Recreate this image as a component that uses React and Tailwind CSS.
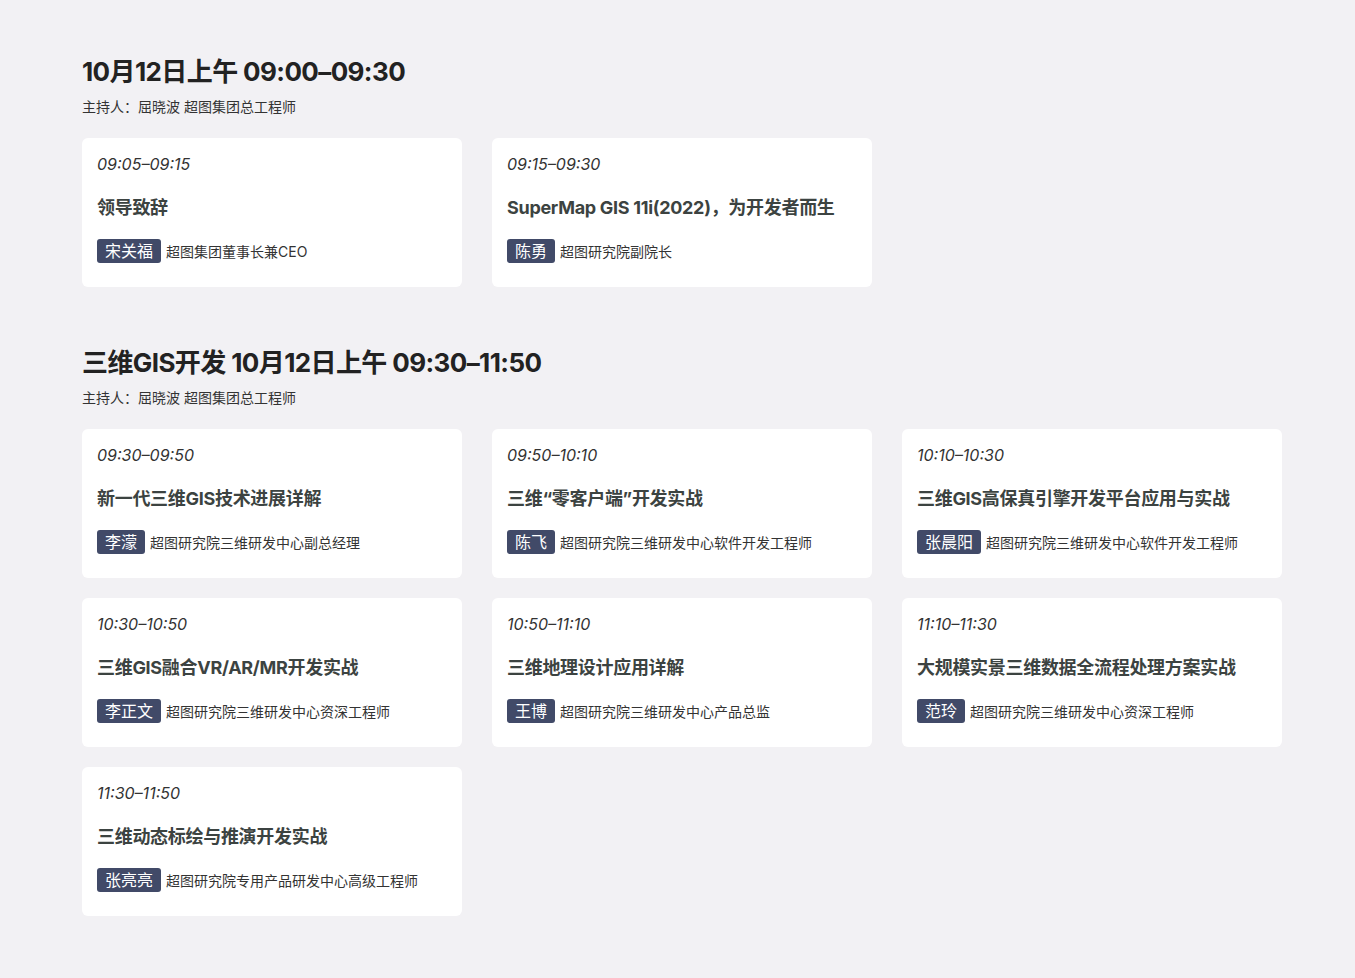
const sections = [
  {
    title: '10月12日上午 09:00–09:30',
    host: '主持人：屈晓波 超图集团总工程师',
    talks: [
      { time: '09:05–09:15', title: '领导致辞', name: '宋关福', role: '超图集团董事长兼CEO' },
      { time: '09:15–09:30', title: 'SuperMap GIS 11i(2022)，为开发者而生', name: '陈勇', role: '超图研究院副院长' },
    ],
  },
  {
    title: '三维GIS开发 10月12日上午 09:30–11:50',
    host: '主持人：屈晓波 超图集团总工程师',
    talks: [
      { time: '09:30–09:50', title: '新一代三维GIS技术进展详解', name: '李濛', role: '超图研究院三维研发中心副总经理' },
      { time: '09:50–10:10', title: '三维“零客户端”开发实战', name: '陈飞', role: '超图研究院三维研发中心软件开发工程师' },
      { time: '10:10–10:30', title: '三维GIS高保真引擎开发平台应用与实战', name: '张晨阳', role: '超图研究院三维研发中心软件开发工程师' },
      { time: '10:30–10:50', title: '三维GIS融合VR/AR/MR开发实战', name: '李正文', role: '超图研究院三维研发中心资深工程师' },
      { time: '10:50–11:10', title: '三维地理设计应用详解', name: '王博', role: '超图研究院三维研发中心产品总监' },
      { time: '11:10–11:30', title: '大规模实景三维数据全流程处理方案实战', name: '范玲', role: '超图研究院三维研发中心资深工程师' },
      { time: '11:30–11:50', title: '三维动态标绘与推演开发实战', name: '张亮亮', role: '超图研究院专用产品研发中心高级工程师' },
    ],
  },
];

function TalkCard({ talk }) {
  return (
    <div className="bg-white rounded-md pt-4 pb-6 px-[15px] h-[149px]">
      <div className="italic text-[16px] leading-5 text-[#333]">{talk.time}</div>
      <div className="mt-[21px] text-[18px] leading-[26px] font-bold tracking-[-0.3px] text-[#3c4341]">{talk.title}</div>
      <div className="mt-[18px] flex items-center">
        <span className="bg-[#414a68] text-white text-[16px] leading-6 h-6 px-2 rounded-[3px]">{talk.name}</span>
        <span className="ml-[5px] text-[14px] text-[#333]">{talk.role}</span>
      </div>
    </div>
  );
}

export default function App() {
  return (
    <div
      className="min-h-[978px] bg-[#f2f1f4] pl-[82px] pt-[55px] pb-10"
      style={{ fontFamily: 'Inter, "Noto Sans CJK SC", sans-serif' }}
    >
      {sections.map((s, i) => (
        <section key={i} className={i > 0 ? 'mt-[59px]' : ''}>
          <h2 className="text-[26px] leading-[34px] font-bold tracking-[-0.6px] text-[#222]">{s.title}</h2>
          <p className="mt-[8px] text-[14px] leading-5 text-[#333]">{s.host}</p>
          <div className="mt-[21px] grid grid-cols-[380px_380px_380px] gap-x-[30px] gap-y-5">
            {s.talks.map((t) => (
              <TalkCard key={t.time} talk={t} />
            ))}
          </div>
        </section>
      ))}
    </div>
  );
}
